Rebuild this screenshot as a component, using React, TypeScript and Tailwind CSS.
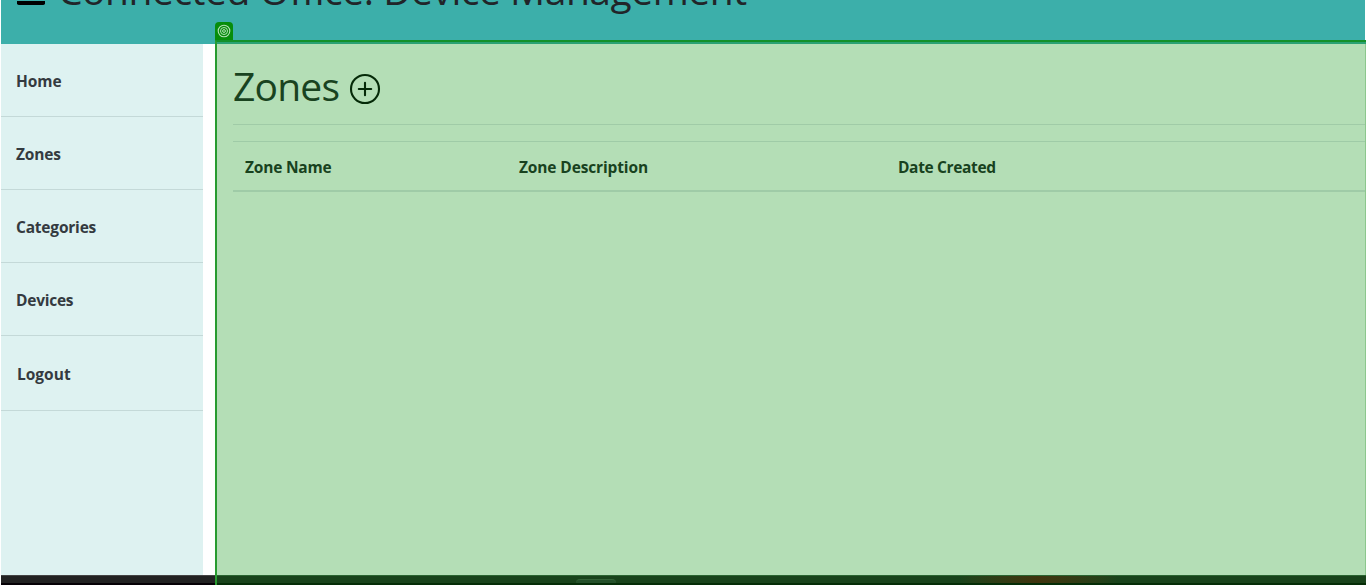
const navItems = [
  { label: 'Home', row: 'h-[73px] pl-[15px] pt-[25px]', text: 'tracking-[-0.05px]' },
  { label: 'Zones', row: 'h-[73px] pl-[15px] pt-[25px]', text: 'tracking-[-0.15px]' },
  { label: 'Categories', row: 'h-[73px] pl-[15px] pt-[25px]', text: 'tracking-[-0.2px]' },
  { label: 'Devices', row: 'h-[73px] pl-[15px] pt-[25px]', text: 'tracking-[-0.25px]' },
  { label: 'Logout', row: 'h-[75px] pl-[16px] pt-[26px]', text: 'tracking-[0px]' },
];

function Header() {
  return (
    <header className="ml-px mr-px flex h-11 shrink-0 items-start overflow-hidden bg-[#3cafaa]">
      <svg className="ml-4 h-11 w-7 shrink-0" viewBox="0 0 28 44" aria-hidden="true">
        <path d="M0 1h28v2.2q0 1.8-1.8 1.8H1.8Q0 5 0 3.2z" fill="#000" />
      </svg>
      <h1 className="-mt-[30px] ml-[13px] whitespace-nowrap text-[39px] leading-10 tracking-[-0.47px] text-[#212529]">
        Connected Office: Device Management
      </h1>
    </header>
  );
}

function Sidebar() {
  return (
    <nav className="ml-px w-[202px] shrink-0 bg-[#def2f1]">
      {navItems.map((item) => (
        <div key={item.label} className={`border-b border-[#c4d9d8] ${item.row}`}>
          <a className={`block text-[15.5px] font-bold leading-6 text-[#343a40] ${item.text}`}>{item.label}</a>
        </div>
      ))}
    </nav>
  );
}

function ZonesPanel() {
  return (
    <main className="ml-3 min-w-0 flex-1 border-r border-[#8cc78d] bg-[#b4deb6] pl-[18px]">
      <div className="flex h-[81px] items-start border-b border-[#a0cba7] pt-5">
        <h2 className="text-[39px] leading-[44px] tracking-[-0.8px] text-[#19431f]">Zones</h2>
        <svg className="ml-[10px] mt-[9px] h-8 w-8" viewBox="0 0 32 32" fill="none" stroke="#052a08" strokeWidth="2.1" aria-hidden="true">
          <circle cx="16" cy="16" r="14" />
          <path d="M16 9.8v12.4M9.8 16h12.4" strokeLinecap="round" />
        </svg>
      </div>
      <div className="mt-4 grid h-[51px] grid-cols-[274px_379px_1fr] border-b-2 border-t border-b-[#9fcba7] border-t-[#9fcba7] pl-3 pt-[13px] text-[15.5px] font-bold leading-6 text-[#18421e]">
        <span className="tracking-[-0.2px]">Zone Name</span>
        <span className="tracking-[-0.13px]">Zone Description</span>
        <span className="tracking-[-0.35px]">Date Created</span>
      </div>
    </main>
  );
}

function Taskbar() {
  return (
    <footer className="flex h-[10px] shrink-0 pl-px">
      <div className="w-[214px] border-b-2 border-t border-b-[#050105] border-t-[#444] bg-[#222]" />
      <div className="flex flex-1 items-end border-b-2 border-t border-b-[#052d07] border-t-[#2b6431] bg-[#19431b]">
        <div className="ml-[361px] h-1 w-10 rounded-t border-t border-[#346237] bg-[#24502a]" />
        <div className="ml-[335px] h-full w-[175px] bg-linear-to-r from-[#19431b] from-5% via-[#40340e] via-50% to-[#19431b] to-95%" />
      </div>
    </footer>
  );
}

function SelectionFrame() {
  return (
    <div className="pointer-events-none absolute left-[215px] top-[22px] h-[563px] w-[1151px]">
      <div className="flex h-[18px] w-[18px] items-center justify-center rounded-t bg-[#078d0b]">
        <svg className="h-[14px] w-[14px]" viewBox="0 0 14 14" fill="none" stroke="#b5e0b7" aria-hidden="true">
          <circle cx="7" cy="7" r="5.8" strokeWidth="1.1" />
          <circle cx="7" cy="7" r="3.5" />
          <circle cx="7" cy="7" r="1.4" />
        </svg>
      </div>
      <div className="h-[545px] border-l-2 border-t-2 border-l-[#289b30] border-t-[#13902a]">
        <div className="h-[2px] bg-[#2aa173]" />
      </div>
    </div>
  );
}

export default function App() {
  return (
    <div className="relative flex h-[585px] w-[1366px] flex-col overflow-hidden bg-white font-['Open_Sans','Noto_Sans',sans-serif]">
      <Header />
      <div className="flex min-h-0 flex-1">
        <Sidebar />
        <ZonesPanel />
      </div>
      <Taskbar />
      <SelectionFrame />
    </div>
  );
}
